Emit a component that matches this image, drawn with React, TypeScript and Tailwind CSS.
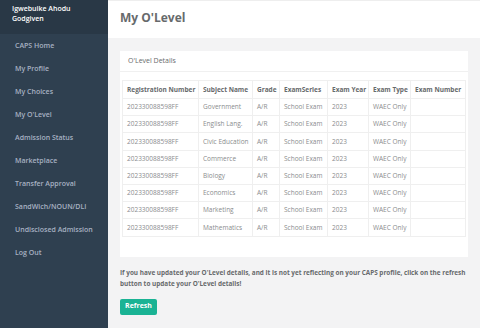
import React from "react";

const menu = [
  "CAPS Home",
  "My Profile",
  "My Choices",
  "My O'Level",
  "Admission Status",
  "Marketplace",
  "Transfer Approval",
  "SandWich/NOUN/DLI",
  "Undisclosed Admission",
  "Log Out",
];

const subjects = [
  "Government",
  "English Lang.",
  "Civic Education",
  "Commerce",
  "Biology",
  "Economics",
  "Marketing",
  "Mathematics",
];

const cols = [
  { h: "Registration Number", w: "w-[76px]" },
  { h: "Subject Name", w: "w-[54px]" },
  { h: "Grade", w: "w-[27px]" },
  { h: "ExamSeries", w: "w-[48px]" },
  { h: "Exam Year", w: "w-[41px]" },
  { h: "Exam Type", w: "w-[42px]" },
  { h: "Exam Number", w: "w-[55px]" },
];

export default function App() {
  return (
    <div
      className="flex w-[480px] h-[328px] overflow-hidden text-[#676a6c]"
      style={{ fontFamily: '"Open Sans", "Liberation Sans", sans-serif' }}
    >
      <aside className="w-[108px] shrink-0 bg-[#2f4050] flex flex-col">
        <div className="h-[34px] bg-[#293846] px-[12px] pt-[4px] text-[7px] leading-[9.5px] font-semibold text-white">
          Igwebuike Ahodu
          <br />
          Godgiven
        </div>
        <nav className="flex flex-col pt-[1px]">
          {menu.map((m) => (
            <div
              key={m}
              className="h-[23px] flex items-center pl-[15px] text-[7px] font-semibold text-[#a7b1c2]"
            >
              {m}
            </div>
          ))}
        </nav>
      </aside>
      <main className="flex-1 bg-[#f3f3f4] flex flex-col">
        <div className="h-[38px] bg-white border-t border-[#eeeeee] flex items-center pl-[12px] pb-[3px]">
          <h1 className="text-[12px] font-bold text-[#676a6c]">My O'Level</h1>
        </div>
        <div className="pl-[12px] pr-[12px] pt-[13px]">
          <div className="bg-white">
            <div className="h-[21px] flex items-center pl-[8px] text-[7px] border-b border-[#f0f0f0]">
              O'Level Details
            </div>
            <div className="px-[2px] pt-[8px] pb-[20px]">
              <table className="table-fixed border-collapse border border-[#efefef] text-[6.5px]">
                <thead>
                  <tr className="h-[18px]">
                    {cols.map((c) => (
                      <th
                        key={c.h}
                        className={`${c.w} border border-[#efefef] text-left font-bold pl-[4px] whitespace-nowrap`}
                      >
                        {c.h}
                      </th>
                    ))}
                  </tr>
                </thead>
                <tbody>
                  {subjects.map((s) => (
                    <tr key={s} className="h-[17.2px]">
                      <td className="border border-[#efefef] pl-[4px] whitespace-nowrap text-[#8a8c8e]">
                        202330088598FF
                      </td>
                      <td className="border border-[#efefef] pl-[4px] whitespace-nowrap text-[#8a8c8e]">
                        {s}
                      </td>
                      <td className="border border-[#efefef] pl-[4px] text-[#8a8c8e]">A/R</td>
                      <td className="border border-[#efefef] pl-[4px] whitespace-nowrap text-[#8a8c8e]">
                        School Exam
                      </td>
                      <td className="border border-[#efefef] pl-[4px] text-[#8a8c8e]">2023</td>
                      <td className="border border-[#efefef] pl-[4px] whitespace-nowrap text-[#8a8c8e]">
                        WAEC Only
                      </td>
                      <td className="border border-[#efefef]"></td>
                    </tr>
                  ))}
                </tbody>
              </table>
            </div>
          </div>
          <p className="mt-[10px] text-[6.4px] leading-[11px] font-bold text-[#676a6c]">
            If you have updated your O'Level details, and it is not yet reflecting on your CAPS profile, click on the refresh button to update your O'Level details!
          </p>
          <button className="mt-[10px] h-[16px] w-[37px] bg-[#1ab394] rounded-[2px] text-white text-[7px] font-bold flex items-center justify-center">
            Refresh
          </button>
        </div>
      </main>
    </div>
  );
}
